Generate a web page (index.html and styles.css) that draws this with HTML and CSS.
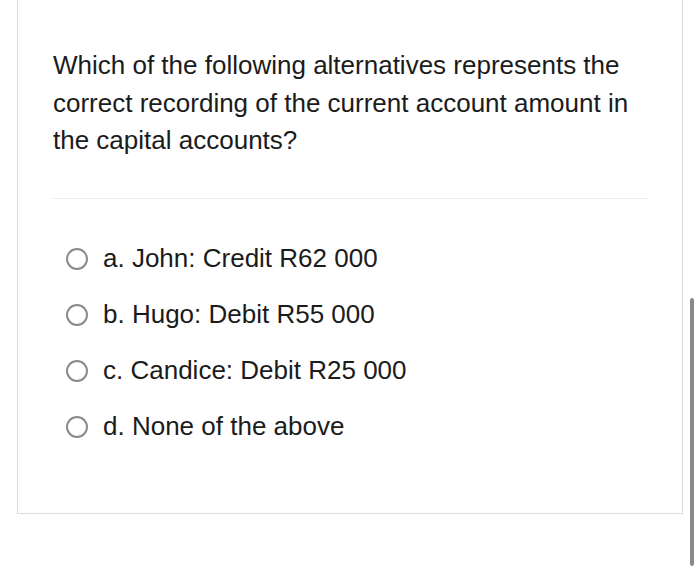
FILE: index.html
```html
<!DOCTYPE html>
<html>
<head>
<meta charset="utf-8">
<link rel="stylesheet" href="styles.css">
</head>
<body>
<div class="page">
  <div class="card">
    <p class="question">Which of the following alternatives represents the correct recording of the current account amount in the capital accounts?</p>
    <hr class="divider">
    <div class="options">
      <label class="option"><span class="radio"></span><span class="label">a. John: Credit R62 000</span></label>
      <label class="option"><span class="radio"></span><span class="label">b. Hugo: Debit R55 000</span></label>
      <label class="option"><span class="radio"></span><span class="label">c. Candice: Debit R25 000</span></label>
      <label class="option"><span class="radio"></span><span class="label">d. None of the above</span></label>
    </div>
  </div>
  <div class="scrollbar"></div>
</div>
</body>
</html>
```
FILE: styles.css
```css
html, body {
  margin: 0;
  padding: 0;
  background: #ffffff;
}
body {
  font-family: "Liberation Sans", Arial, sans-serif;
  color: #1b1b1b;
  width: 700px;
  height: 581px;
  overflow: hidden;
}
.page {
  position: relative;
  width: 700px;
  height: 581px;
}
.card {
  margin-left: 17px;
  margin-top: -1px;
  width: 666px;
  border: 1px solid #dcdcdc;
  padding: 47px 34px 58px 35px;
  box-sizing: border-box;
}
.question {
  margin: 0;
  font-size: 26px;
  line-height: 37.5px;
}
.divider {
  margin: 38px 0 32px 0;
  border: none;
  border-top: 1px solid #ebebeb;
  height: 0;
}
.options {
  display: flex;
  flex-direction: column;
}
.option {
  display: flex;
  align-items: center;
  height: 56px;
  font-size: 26px;
  padding-left: 13px;
}
.radio {
  width: 18px;
  height: 18px;
  border: 2px solid #8a8a8a;
  border-radius: 50%;
  margin-right: 15px;
  flex: none;
}
.scrollbar {
  position: absolute;
  left: 690px;
  top: 299px;
  width: 4px;
  height: 268px;
  border-radius: 2px;
  background: #8a8a8a;
}
```
